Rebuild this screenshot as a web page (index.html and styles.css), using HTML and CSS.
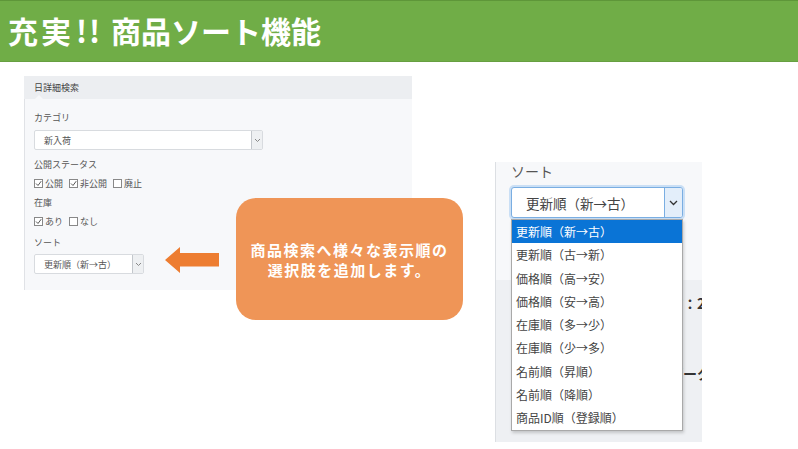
FILE: index.html
```html
<!DOCTYPE html>
<html lang="ja">
<head>
<meta charset="utf-8">
<link rel="stylesheet" href="styles.css">
</head>
<body>
<header class="titlebar"><h1 class="title"><span class="t-a">充実</span><span class="t-b">!!</span> 商品ソート機能</h1></header>
<main class="slide">
  <section class="panel">
    <div class="panel-head"><span class="panel-title">日詳細検索</span><span class="notch"></span></div>
    <div class="panel-body">
      <div class="lbl first">カテゴリ</div>
      <div class="sel sel-wide"><span class="sel-text">新入荷</span><span class="sel-btn"><svg width="7" height="5" viewBox="0 0 7 5"><polyline points="1,1 3.5,3.5 6,1" fill="none" stroke="#888" stroke-width="1"/></svg></span></div>
      <div class="lbl gap8">公開ステータス</div>
      <div class="checks">
        <span class="chk"><span class="box"><svg width="7" height="7" viewBox="0 0 7 7"><polyline points="1,3.5 3,5.5 6.2,1.2" fill="none" stroke="#555" stroke-width="1"/></svg></span>公開</span>
        <span class="chk"><span class="box"><svg width="7" height="7" viewBox="0 0 7 7"><polyline points="1,3.5 3,5.5 6.2,1.2" fill="none" stroke="#555" stroke-width="1"/></svg></span>非公開</span>
        <span class="chk"><span class="box"></span>廃止</span>
      </div>
      <div class="lbl gap6">在庫</div>
      <div class="checks">
        <span class="chk"><span class="box"><svg width="7" height="7" viewBox="0 0 7 7"><polyline points="1,3.5 3,5.5 6.2,1.2" fill="none" stroke="#555" stroke-width="1"/></svg></span>あり</span>
        <span class="chk"><span class="box"></span>なし</span>
      </div>
      <div class="lbl gap8">ソート</div>
      <div class="sel sel-short"><span class="sel-text">更新順（新→古）</span><span class="sel-btn"><svg width="7" height="5" viewBox="0 0 7 5"><polyline points="1,1 3.5,3.5 6,1" fill="none" stroke="#888" stroke-width="1"/></svg></span></div>
    </div>
  </section>

  <section class="rpanel">
    <div class="rtop">
      <div class="rlbl">ソート</div>
      <div class="rsel-wrap">
        <div class="rsel"><span class="rsel-text">更新順（新→古）</span><span class="rsel-btn"><svg width="9" height="6" viewBox="0 0 9 6"><polyline points="1,1 4.5,4.5 8,1" fill="none" stroke="#333" stroke-width="1.3"/></svg></span></div>
        <ul class="list">
          <li class="active">更新順（新→古）</li>
          <li>更新順（古→新）</li>
          <li>価格順（高→安）</li>
          <li>価格順（安→高）</li>
          <li>在庫順（多→少）</li>
          <li>在庫順（少→多）</li>
          <li>名前順（昇順）</li>
          <li>名前順（降順）</li>
          <li>商品ID順（登録順）</li>
        </ul>
      </div>
    </div>
    <div class="rbottom">
      <div class="hidden-row r1">検索結果数：2</div>
      <div class="hidden-row r2">商品データ</div>
    </div>
  </section>

  <svg class="arrow" width="54" height="26" viewBox="0 0 54 26"><polygon points="0,13 15,0 15,6 54,6 54,19.5 15,19.5 15,26" fill="#ed7d31"/></svg>
  <div class="callout">商品検索へ様々な表示順の<br>選択肢を追加します。</div>
</main>
</body>
</html>
```

FILE: styles.css
```css
* { box-sizing: border-box; margin: 0; padding: 0; }
html, body { width: 798px; height: 449px; overflow: hidden; background: #fff; }
body { font-family: "Noto Sans CJK JP", "Noto Sans", sans-serif; color: #555; }

.titlebar {
  height: 62px;
  background: #70ad47;
  border-top: 1px solid #5e9639;
  border-bottom: 1px solid #679f41;
  padding-left: 8px;
  display: flex;
  align-items: center;
}
.title {
  color: #fff;
  font-size: 30px;
  font-weight: 700;
  line-height: 1;
  padding-bottom: 2px;
  white-space: nowrap;
}
.t-a { letter-spacing: 3px; }
.t-b { letter-spacing: 2px; margin-left: 2px; margin-right: 2px; }

.slide { position: relative; display: flex; align-items: flex-start; height: 387px; }

/* left panel */
.panel { width: 388px; margin-left: 24px; margin-top: 14px; }
.panel-head {
  position: relative;
  height: 23px;
  background: #eceef1;
  padding-left: 10px;
  display: flex;
  align-items: center;
}
.panel-title { font-size: 9px; color: #444; line-height: 1; }
.notch {
  position: absolute;
  left: 11px;
  bottom: 0;
  width: 0; height: 0;
  border-left: 4px solid transparent;
  border-right: 4px solid transparent;
  border-bottom: 4px solid #f7f8fa;
}
.panel-body {
  background: #f7f8fa;
  border-left: 1px solid #e0e2e6;
  padding: 12px 0 16px 9px;
  height: 191px;
}
.lbl { font-size: 9px; line-height: 14px; color: #555; }
.gap8 { margin-top: 8px; }
.gap6 { margin-top: 6px; }
.sel {
  margin-top: 5px;
  height: 20px;
  background: #fff;
  border: 1px solid #d8dbdf;
  border-radius: 2px;
  display: flex;
  align-items: center;
  justify-content: space-between;
}
.sel-short { margin-top: 4px; width: 110px; }
.sel-wide { width: 229px; }
.sel-text { font-size: 9px; color: #555; padding-left: 9px; }
.sel-btn {
  width: 11px; height: 100%;
  background: #eef0f2;
  border-left: 1px solid #c3c7cc;
  display: flex; align-items: center; justify-content: center;
}
.checks { margin-top: 4px; height: 14px; display: flex; align-items: center; gap: 6px; }
.chk { display: flex; align-items: center; gap: 2px; font-size: 9px; color: #555; }
.box {
  width: 9px; height: 9px;
  border: 1px solid #888;
  background: #fff;
  display: flex; align-items: center; justify-content: center;
}

/* right panel */
.rpanel {
  width: 207px;
  height: 280px;
  margin-left: 83px;
  margin-top: 100px;
  border-left: 1px solid #dcdfe3;
  overflow: hidden;
  display: flex;
  flex-direction: column;
}
.rtop { height: 118px; background: #f7f8fa; padding-left: 15px; position: relative; z-index: 2; }
.rlbl { font-size: 14px; line-height: 18px; color: #555; }
.rsel-wrap { position: relative; margin-top: 7px; width: 172px; }
.rsel {
  height: 31px;
  background: #fff;
  border: 1px solid #7aaee2;
  border-radius: 3px;
  box-shadow: 0 0 0 2px #cadff5;
  display: flex;
  align-items: center;
  justify-content: space-between;
  overflow: hidden;
}
.rsel-text { font-size: 13.5px; color: #444; padding-left: 14px; }
.rsel-btn {
  width: 18px; height: 100%;
  background: #e3eefa;
  border-left: 1px solid #7aaee2;
  display: flex; align-items: center; justify-content: center;
}
.list {
  position: absolute;
  left: 0;
  top: 32px;
  width: 172px;
  list-style: none;
  background: #fff;
  border: 1px solid #a9a9a9;
  box-shadow: 1px 2px 3px rgba(0,0,0,0.18);
}
.list li {
  height: 23.3px;
  line-height: 23.3px;
  font-size: 12px;
  color: #444;
  padding-left: 4px;
  white-space: nowrap;
}
.list li.active { background: #0a74d6; color: #fff; }
.rbottom { flex: 1; background: #eef0f3; padding-left: 15px; padding-top: 16px; position: relative; z-index: 1; }
.hidden-row { font-size: 14px; font-weight: 700; line-height: 14px; color: #333; white-space: nowrap; }
.r1 { margin-left: 102px; }
.r2 { margin-top: 56px; margin-left: 130px; }

/* overlays */
.arrow { position: absolute; left: 165px; top: 185px; }
.callout {
  position: absolute;
  left: 236px;
  top: 136px;
  width: 227px;
  height: 122px;
  border-radius: 20px;
  background: #ef9557;
  color: #fff;
  font-size: 15px;
  font-weight: 700;
  letter-spacing: 1.5px;
  line-height: 20px;
  text-align: center;
  display: flex;
  align-items: center;
  justify-content: center;
  padding-top: 2px;
}
```
